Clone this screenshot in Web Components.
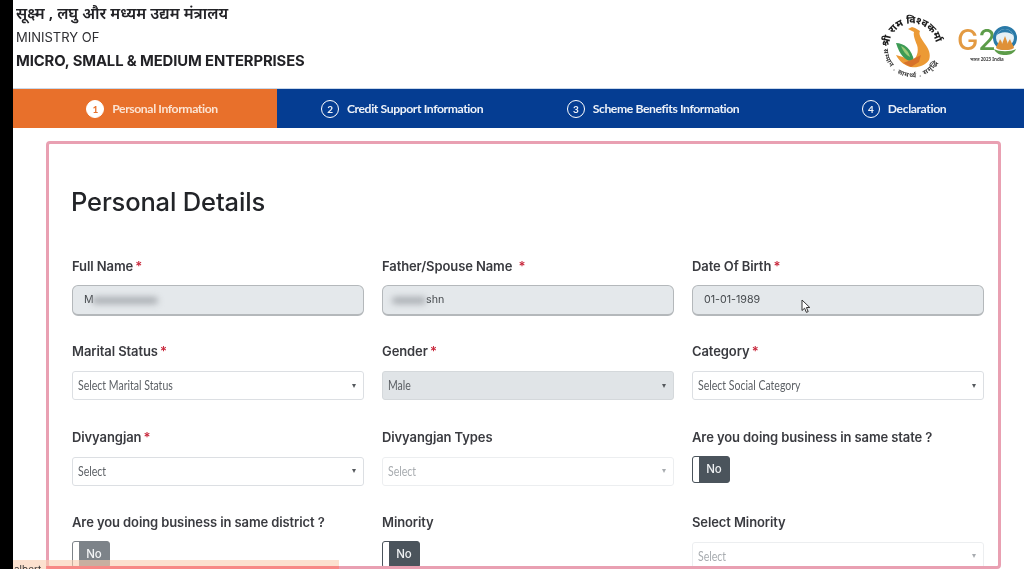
<!DOCTYPE html>
<html lang="en">
<head>
<meta charset="utf-8">
<title>Personal Details</title>
<style>
  html, body { margin: 0; height: 569px; overflow: hidden; background: #fff; }
  body { font-family: "Inter", "Noto Sans", sans-serif; }
</style>
</head>
<body>
<app-shell>
  <msme-header></msme-header>
  <step-bar>
    <step-item num="1" active>Personal Information</step-item>
    <step-item num="2">Credit Support Information</step-item>
    <step-item num="3">Scheme Benefits Information</step-item>
    <step-item num="4">Declaration</step-item>
  </step-bar>
  <form-card heading="Personal Details">
    <form-field label="Full Name" required>
      <text-box><span>M</span><blur-mask size="66"></blur-mask></text-box>
    </form-field>
    <form-field label="Father/Spouse Name" required wide-star>
      <text-box><blur-mask size="34"></blur-mask><span>shn</span></text-box>
    </form-field>
    <form-field label="Date Of Birth" required>
      <text-box pointer><span>01-01-1989</span></text-box>
    </form-field>

    <form-field label="Marital Status" required><select-box>Select Marital Status</select-box></form-field>
    <form-field label="Gender" required><select-box filled>Male</select-box></form-field>
    <form-field label="Category" required><select-box>Select Social Category</select-box></form-field>

    <form-field label="Divyangjan" required><select-box>Select</select-box></form-field>
    <form-field label="Divyangjan Types"><select-box disabled>Select</select-box></form-field>
    <form-field label="Are you doing business in same state ?"><toggle-switch>No</toggle-switch></form-field>

    <form-field label="Are you doing business in same district ?"><toggle-switch faded>No</toggle-switch></form-field>
    <form-field label="Minority"><toggle-switch>No</toggle-switch></form-field>
    <form-field label="Select Minority"><select-box disabled>Select</select-box></form-field>
  </form-card>
  <status-strip>albert</status-strip>
</app-shell>

<script>
/**
 * Small helper so each element only has to hand over its markup.
 *
 * @param {string} name - The tag name.
 * @param {string} html - Styles and markup of the shadow root.
 * @param {Function} [ready] - Called with the element once connected.
 */
const define = (name, html, ready) => {
  const template = document.createElement('template')
  template.innerHTML = html

  customElements.define(name, class extends HTMLElement {
    constructor () {
      super()
      this.attachShadow({ mode: 'open' })
        .appendChild(template.content.cloneNode(true))
    }

    connectedCallback () {
      if (ready) ready(this)
    }
  })
}

define('app-shell', `
  <style>
    :host {
      display: block;
      position: relative;
      height: 569px;
      padding-left: 13px;
      box-sizing: border-box;
      overflow: hidden;
      background: #fff;
      filter: blur(.3px);
    }
    :host::before {
      content: '';
      position: absolute;
      left: 0;
      top: 0;
      bottom: 0;
      width: 13px;
      background: #000;
    }
  </style>
  <slot></slot>
`)

define('msme-header', `
  <style>
    :host {
      display: flex;
      justify-content: space-between;
      height: 88px;
      box-sizing: border-box;
      padding: 3px 0 0 3px;
      color: #222226;
    }
    .hi { font: 600 15.7px/20px "Noto Sans", "Noto Sans Devanagari", "Lohit Devanagari", sans-serif; }
    .en { font: 400 13px/18px "Inter", sans-serif; margin-top: 5px; color: #2f2f33; }
    .big { font: 700 14.8px/20px "Inter", sans-serif; margin-top: 5px; letter-spacing: -.1px; }
    .logos { display: flex; align-items: flex-start; gap: 12px; padding: 8px 5px 0 0; }
    svg { display: block; overflow: visible; }
  </style>
  <div>
    <div class="hi">सूक्ष्म , लघु और मध्यम उद्यम मंत्रालय</div>
    <div class="en">MINISTRY OF</div>
    <div class="big">MICRO, SMALL &amp; MEDIUM ENTERPRISES</div>
  </div>
  <div class="logos">
    <svg width="62" height="72" viewBox="0 0 62 72">
      <defs>
        <path id="ring-top" d="M8 36a23.500 23.500 0 0 1 47 0"/>
        <path id="ring-bottom" d="M3 38a28.500 28.500 0 0 0 57 0"/>
      </defs>
      <text font-family="Noto Sans, sans-serif" font-size="10" font-weight="800" fill="#1d1d1d">
        <textPath href="#ring-top">श्री राम विश्वकर्मा</textPath>
      </text>
      <text font-family="Noto Sans, sans-serif" font-size="6.500" font-weight="700" fill="#3a3a3a" letter-spacing=".9">
        <textPath href="#ring-bottom">सम्मान . सामर्थ्य . समृद्धि</textPath>
      </text>
      <path d="M27 18l4-2 3 1 5 3c-2 4 2 8 5 13 4 5 6 11 4 16-4 6-12 8-18 7-6-1-12-6-15-12l7 2 8 4c6-2 8-10 6-16-2-5-4-10-3-13z" fill="#ec9a35"/>
      <path d="M15 32c8 0 16 6 18 18-8 1-14-5-18-18z" fill="#3d9b55"/>
      <path d="M20 35c4 2 8 6 9 11-4-2-7-6-9-11z" fill="#9ccb78"/>
      <path d="M22 52l8-3 10-5-2 7-8 5z" fill="#d7722b"/>
    </svg>
    <svg width="64" height="60" viewBox="0 0 64 60">
      <text x="2" y="39" font-family="Inter, sans-serif" font-size="28" font-weight="500" fill="#e39a42" textLength="39" lengthAdjust="spacingAndGlyphs">G<tspan fill="#5c9c49">2</tspan></text>
      <circle cx="50" cy="27" r="10.500" fill="#e6f0f5" stroke="#2a7aa8" stroke-width="3"/>
      <path d="M41 25c4-5 14-5 18 0-2-4-5-7-9-7s-7 3-9 7z" fill="#2a7aa8"/>
      <path d="M41 37c1-4 3-5 4-9 1 2 2 2 2 5 1-3 2-5 3-8 1 3 2 5 3 8 0-3 1-3 2-5 1 4 3 5 4 9-3 2-6 2-9 2s-6 0-9-2z" fill="#df9138"/>
      <path d="M39 38c5 3 17 3 22 0-2 5-7 6-11 6s-9-1-11-6z" fill="#5c9c49"/>
      <text x="15" y="50" font-family="Noto Sans, sans-serif" font-size="4.500" font-weight="700" fill="#444">भारत 2023 India</text>
    </svg>
  </div>
`)

define('step-bar', `
  <style>
    :host {
      display: grid;
      grid-template-columns: 264px 250px 252px 1fr;
      height: 40px;
      background: #053d92;
      color: #fff;
      border-top: 1px solid #c9d8ea;
      box-sizing: border-box;
    }
    ::slotted(:last-child) { padding-left: 5px; }
  </style>
  <slot></slot>
`)

define('step-item', `
  <style>
    :host {
      display: flex;
      align-items: center;
      justify-content: center;
      gap: 8px;
      font: 700 12.200px/16px "Lato", sans-serif;
      letter-spacing: -.4px;
      color: #eef2f8;
    }
    :host([active]) {
      background: #e8702b;
      padding-left: 14px;
      box-sizing: border-box;
      color: #fbe3d2;
    }
    .label { padding-top: 1px; }
    .num {
      width: 18px;
      height: 18px;
      box-sizing: border-box;
      border: 1.500px solid #fff;
      border-radius: 50%;
      display: grid;
      place-items: center;
      font: 700 10px/1 "Lato", sans-serif;
      flex: none;
    }
    :host([active]) .num {
      background: #fff;
      color: #e8702b;
    }
  </style>
  <span class="num"></span><span class="label"><slot></slot></span>
`, (el) => {
  el.shadowRoot.querySelector('.num').textContent = el.getAttribute('num')
})

define('form-card', `
  <style>
    :host {
      display: block;
      margin: 13px 23px 0 33px;
      height: 428px;
      box-sizing: border-box;
      padding: 0 14px 0 23px;
      border: 3px solid #e9a0b2;
      border-radius: 4px;
      background: #fff;
      overflow: hidden;
    }
    h1 {
      margin: 0 0 0 -1px;
      padding-top: 41px;
      font: 500 25.500px/34px "Inter", sans-serif;
      letter-spacing: -.15px;
      color: #222428;
    }
    .grid {
      display: grid;
      grid-template-columns: repeat(3, 292px);
      grid-auto-rows: 85.3px;
      column-gap: 18px;
      margin-top: 38px;
    }
  </style>
  <h1></h1>
  <div class="grid"><slot></slot></div>
`, (el) => {
  el.shadowRoot.querySelector('h1').textContent = el.getAttribute('heading')
})

define('form-field', `
  <style>
    :host {
      display: block;
      font-family: "Inter", sans-serif;
    }
    .label {
      display: block;
      height: 28px;
      font: 600 13px/19px "Inter", sans-serif;
      letter-spacing: -.1px;
      color: #3a3b40;
    }
    .star { color: #c8283c; margin-left: -1px; }
    :host([wide-star]) .star { margin-left: 3px; }
  </style>
  <span class="label"><span class="text"></span><span class="star"></span></span>
  <slot></slot>
`, (el) => {
  el.shadowRoot.querySelector('.text').textContent = el.getAttribute('label')
  if (el.hasAttribute('required')) el.shadowRoot.querySelector('.star').textContent = ' *'
})

define('text-box', `
  <style>
    :host {
      display: flex;
      align-items: center;
      position: relative;
      height: 31px;
      box-sizing: border-box;
      padding: 0 11px;
      background: #e4e8eb;
      border: 1px solid #b4b8bb;
      border-bottom-width: 2px;
      border-radius: 6px;
      font: 400 10.700px/1 "Inter", sans-serif;
      color: #45494d;
    }
    svg { display: none; position: absolute; left: 108px; top: 13px; }
    :host([pointer]) svg { display: block; }
  </style>
  <slot></slot>
  <svg width="10" height="15" viewBox="0 0 10 15">
    <path d="M1 1v10.500l2.600-2.300 1.800 4.200 1.800-.8-1.800-4.100h3.400z" fill="#fff" stroke="#333" stroke-width="1"/>
  </svg>
`)

define('blur-mask', `
  <style>
    :host {
      display: inline-block;
      height: 7px;
      background: #a9adb2;
      border-radius: 4px;
      filter: blur(3px);
      margin-left: -2px;
    }
  </style>
`, (el) => {
  el.style.width = `${el.getAttribute('size')}px`
})

define('select-box', `
  <style>
    :host {
      display: flex;
      align-items: center;
      justify-content: space-between;
      height: 29px;
      margin-top: 1px;
      box-sizing: border-box;
      padding: 0 6px 0 5px;
      background: #fff;
      border: 1px solid #dcdfe3;
      border-radius: 3px;
      font: 400 13px/1 "Lato", sans-serif;
      color: #5d6166;
    }
    :host([filled]) {
      background: #e0e4e7;
      border-color: #d4d8db;
    }
    :host([disabled]) {
      border-color: #eceef0;
      color: #a8acb0;
    }
    .text {
      display: inline-block;
      transform: scaleX(.81);
      transform-origin: left center;
    }
    .caret {
      width: 0;
      height: 0;
      margin-right: 1px;
      border-left: 2.500px solid transparent;
      border-right: 2.500px solid transparent;
      border-top: 4px solid #55595d;
    }
    :host([disabled]) .caret { border-top-color: #a8acb0; }
  </style>
  <span class="text"><slot></slot></span>
  <span class="caret"></span>
`)

define('toggle-switch', `
  <style>
    :host {
      display: block;
      width: 38px;
      height: 27px;
      box-sizing: border-box;
      position: relative;
      background: #4b545c;
      border: 1px solid #4b545c;
      border-radius: 3px;
      color: #eef0f2;
      font: 500 11.500px/25px "Inter", sans-serif;
      text-align: center;
      padding-left: 6px;
    }
    :host::before {
      content: '';
      position: absolute;
      left: 0;
      top: 0;
      bottom: 0;
      width: 6px;
      background: #fff;
      border-radius: 2px 0 0 2px;
    }
    :host([faded]) { opacity: .72; }
  </style>
  <slot></slot>
`)

define('status-strip', `
  <style>
    :host {
      position: absolute;
      left: 13px;
      bottom: 0;
      width: 326px;
      height: 9px;
      background: rgba(250, 205, 175, .6);
      font: 400 10px/13px "Inter", sans-serif;
      color: #333;
      overflow: hidden;
    }
    :host::after {
      content: '';
      position: absolute;
      left: 33px;
      right: 0;
      bottom: 0;
      height: 3px;
      background: rgba(248, 120, 120, .75);
    }
    span { display: inline-block; padding: 3px 0 0 1px; }
  </style>
  <span><slot></slot></span>
`)
</script>
</body>
</html>
